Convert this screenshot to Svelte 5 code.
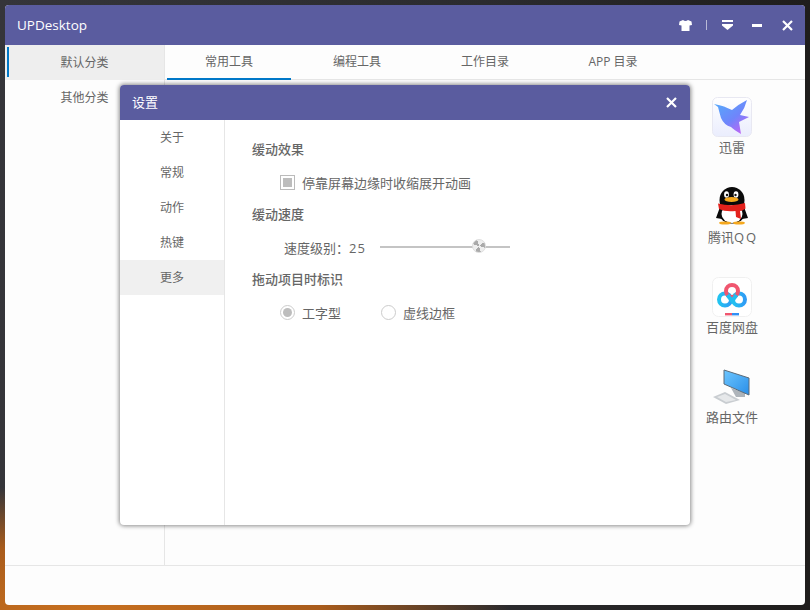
<script>
    let cats = ["默认分类", "其他分类"];
    let tabs = ["常用工具", "编程工具", "工作目录", "APP 目录"];
    let menu = ["关于", "常规", "动作", "热键", "更多"];
</script>

<div class="desktop">
    <div class="window">
        <header class="titlebar">
            <span class="title">UPDesktop</span>
            <div class="tools">
                <svg width="13" height="11" viewBox="0 0 13 11"><path d="M4 0 L0.5 1.5 L0 5 L2.5 5.5 L2.5 11 L10.5 11 L10.5 5.5 L13 5 L12.5 1.5 L9 0 Q6.5 2 4 0 Z" fill="#fff"/></svg>
                <i class="sep"></i>
                <svg width="11" height="10" viewBox="0 0 11 10"><rect width="11" height="2" fill="#fff"/><path d="M0 4 H11 V5.5 L5.5 10 L0 5.5 Z" fill="#fff"/></svg>
                <svg class="min" width="10" height="3" viewBox="0 0 10 3"><rect width="10" height="3" fill="#fff"/></svg>
                <svg width="11" height="11" viewBox="0 0 11 11"><path d="M1 1 L10 10 M10 1 L1 10" stroke="#fff" stroke-width="2.2"/></svg>
            </div>
        </header>

        <div class="body">
            <aside class="cats">
                {#each cats as c, i}
                    <div class="cat" class:on={i === 0}>{c}</div>
                {/each}
            </aside>
            <main class="content">
                <nav class="tabs">
                    {#each tabs as t, i}
                        <div class="tab" class:on={i === 0}>{t}</div>
                    {/each}
                </nav>
                <div class="apps">
                    <div class="app">
                        <svg width="40" height="40" viewBox="0 0 40 40">
                            <defs>
                                <linearGradient id="bird" x1="0" y1="0" x2="0.8" y2="1">
                                    <stop offset="0" stop-color="#52aefb"/>
                                    <stop offset="0.6" stop-color="#6f85fb"/>
                                    <stop offset="1" stop-color="#c463f5"/>
                                </linearGradient>
                                <linearGradient id="tile" x1="0" y1="0" x2="0" y2="1">
                                    <stop offset="0" stop-color="#fff"/>
                                    <stop offset="1" stop-color="#eaedfd"/>
                                </linearGradient>
                            </defs>
                            <rect x="0.5" y="0.5" width="39" height="39" rx="5" fill="url(#tile)" stroke="#e8e8f2"/>
                            <path d="M2 7 Q8 8 12 9.5 Q17 11.5 20 13 Q27 7 35 3 Q33 11 28 18 L37 20 L27 25 L29 37 Q22 33 19 30 Q12 28 9 21 Q7 14 6 10 Z" fill="url(#bird)"/>
                        </svg>
                        <span>迅雷</span>
                    </div>
                    <div class="app">
                        <svg width="40" height="40" viewBox="0 0 40 40">
                            <ellipse cx="20" cy="13" rx="12.5" ry="13" fill="#0a0a0a"/>
                            <ellipse cx="20" cy="26" rx="13" ry="10.5" fill="#0a0a0a"/>
                            <path d="M8 20 L4 31 L10 32 Z M32 20 L36 31 L30 32 Z" fill="#0a0a0a"/>
                            <ellipse cx="20" cy="27" rx="10.5" ry="9" fill="#fff"/>
                            <ellipse cx="14.5" cy="7.5" rx="2.4" ry="3.2" fill="#fff"/>
                            <ellipse cx="24" cy="7.5" rx="2.4" ry="3.2" fill="#fff"/>
                            <circle cx="15" cy="8" r="1.2" fill="#111"/>
                            <circle cx="23.5" cy="8" r="1.2" fill="#111"/>
                            <ellipse cx="19.5" cy="12.5" rx="7" ry="2.4" fill="#f5a81e"/>
                            <path d="M6 16.5 Q20 20 33 16 L33.5 21.5 Q30 24 28 24 L29 32 L24 30 L23.5 24 Q13 25 7 22 Z" fill="#e3211c"/>
                            <ellipse cx="13" cy="36" rx="6" ry="1.6" fill="#f5a81e"/>
                            <ellipse cx="27" cy="36" rx="6" ry="1.6" fill="#f5a81e"/>
                        </svg>
                        <span>腾讯<b>QQ</b></span>
                    </div>
                    <div class="app">
                        <svg width="40" height="40" viewBox="0 0 40 40">
                            <defs>
                                <linearGradient id="pan" x1="0" y1="0" x2="1" y2="0">
                                    <stop offset="0" stop-color="#22c3f0"/>
                                    <stop offset="1" stop-color="#2f9bf5"/>
                                </linearGradient>
                            </defs>
                            <rect x="0.5" y="0.5" width="39" height="39" rx="6" fill="#fff" stroke="#f0f0f0"/>
                            <circle cx="13" cy="22.5" r="6" fill="none" stroke="url(#pan)" stroke-width="4"/>
                            <circle cx="27" cy="22.5" r="6" fill="none" stroke="url(#pan)" stroke-width="4"/>
                            <circle cx="20" cy="14" r="6" fill="none" stroke="#f0566f" stroke-width="4"/>
                            <path d="M15.5 18 L20 24 L24.5 18" fill="none" stroke="#22bdf0" stroke-width="4"/>
                            <rect x="13" y="36" width="7" height="2.4" fill="#f0566f"/>
                            <rect x="20" y="36" width="7" height="2.4" fill="#2f8ff5"/>
                        </svg>
                        <span>百度网盘</span>
                    </div>
                    <div class="app">
                        <svg width="40" height="40" viewBox="0 0 40 40">
                            <defs>
                                <linearGradient id="scr" x1="0" y1="0" x2="1" y2="1">
                                    <stop offset="0" stop-color="#6cc6ff"/>
                                    <stop offset="1" stop-color="#2a8ee8"/>
                                </linearGradient>
                            </defs>
                            <path d="M19 21 L33 26 L33 30 L24 30 Z" fill="#aeb4ba"/>
                            <path d="M12 3 L37 11 L37 28 L12 17 Z" fill="url(#scr)" stroke="#5a6b7a" stroke-width="1"/>
                            <path d="M1 30 L13 25 L28 33 L14 37 Z" fill="#c9cdd1"/>
                            <path d="M5 30 L13 27 L24 33 L14 35 Z" fill="#e6e8ea"/>
                        </svg>
                        <span>路由文件</span>
                    </div>
                </div>
            </main>
        </div>
        <footer class="foot"></footer>

        <div class="modal">
            <div class="modal-head">
                <span>设置</span>
                <svg width="11" height="11" viewBox="0 0 11 11"><path d="M1 1 L10 10 M10 1 L1 10" stroke="#fff" stroke-width="2.2"/></svg>
            </div>
            <div class="modal-body">
                <ul class="menu">
                    {#each menu as m, i}
                        <li class:on={i === 4}>{m}</li>
                    {/each}
                </ul>
                <section class="panel">
                    <h4>缓动效果</h4>
                    <div class="row check-row">
                        <span class="check"><i></i></span>
                        <span>停靠屏幕边缘时收缩展开动画</span>
                    </div>
                    <h4>缓动速度</h4>
                    <div class="row speed-row">
                        <span class="speed-label">速度级别：<b>25</b></span>
                        <div class="slider"><span class="thumb"></span></div>
                    </div>
                    <h4>拖动项目时标识</h4>
                    <div class="row radio-row">
                        <span class="radio sel"><i></i></span>
                        <span class="radio-text">工字型</span>
                        <span class="radio"></span>
                        <span>虚线边框</span>
                    </div>
                </section>
            </div>
        </div>
    </div>
</div>

<style>
    :global(body) {
        margin: 0;
    }
    .desktop {
        width: 810px;
        height: 610px;
        padding: 5px;
        box-sizing: border-box;
        overflow: hidden;
        background:
            radial-gradient(ellipse 420px 130px at 90px 615px, #c8701f 0%, #a95c1c 55%, transparent 100%),
            linear-gradient(90deg, #35353a 0%, #2b2b2e 60%, #1f1d1c 100%);
        font-family: "Open Sans", "Noto Sans CJK SC", sans-serif;
        font-size: 12px;
        color: #666;
    }
    .window {
        position: relative;
        width: 800px;
        height: 600px;
        background: #fdfdfd;
        border-radius: 4px;
        overflow: hidden;
        display: flex;
        flex-direction: column;
    }
    .titlebar {
        height: 40px;
        flex: none;
        background: #5a5c9f;
        display: flex;
        align-items: center;
        justify-content: space-between;
        padding: 0 12px;
        color: #fff;
    }
    .title {
        font-size: 13.5px;
    }
    .tools {
        display: flex;
        align-items: center;
    }
    .tools svg {
        display: block;
    }
    .sep {
        width: 1px;
        height: 10px;
        background: #b9bad6;
        margin: 0 15px 0 14px;
    }
    .min {
        margin: 0 20px 0 19px;
    }
    .body {
        flex: 1;
        display: flex;
        min-height: 0;
    }
    .cats {
        width: 160px;
        box-sizing: border-box;
        border-right: 1px solid #e6e6e6;
    }
    .cat {
        height: 35px;
        line-height: 35px;
        text-align: center;
    }
    .cat.on {
        background: #eeeeee;
        position: relative;
    }
    .cat.on::before {
        content: "";
        position: absolute;
        left: 2px;
        top: 2px;
        bottom: 3px;
        width: 2px;
        background: #0078c8;
    }
    .content {
        flex: 1;
        display: flex;
        flex-direction: column;
    }
    .tabs {
        height: 35px;
        flex: none;
        box-sizing: border-box;
        display: flex;
        border-bottom: 1px solid #e6e6e6;
    }
    .tab {
        width: 128px;
        line-height: 34px;
        text-align: center;
        position: relative;
    }
    .tab.on::after {
        content: "";
        position: absolute;
        left: 2px;
        right: 2px;
        bottom: -1px;
        height: 2px;
        background: #0078c8;
    }
    .apps {
        display: flex;
        flex-direction: column;
        align-items: center;
        width: 90px;
        margin-left: 522px;
        padding-top: 17px;
    }
    .app {
        height: 90px;
        display: flex;
        flex-direction: column;
        align-items: center;
    }
    .app svg {
        display: block;
    }
    .app span {
        margin-top: 1px;
        font-size: 13px;
        line-height: 18px;
        white-space: nowrap;
    }
    .app b {
        font-weight: 400;
        letter-spacing: 2px;
        margin-right: -2px;
    }
    .foot {
        height: 39px;
        flex: none;
        border-top: 1px solid #e6e6e6;
    }
    .modal {
        position: absolute;
        left: 115px;
        top: 80px;
        width: 570px;
        height: 440px;
        background: #fff;
        border-radius: 4px;
        box-shadow: 0 0 4px 1px rgba(0, 0, 0, 0.45);
        overflow: hidden;
        display: flex;
        flex-direction: column;
    }
    .modal-head {
        height: 35px;
        flex: none;
        background: #5a5c9f;
        color: #fff;
        font-size: 13px;
        line-height: 33px;
        display: flex;
        align-items: center;
        justify-content: space-between;
        padding: 0 13px 0 12px;
    }
    .modal-body {
        flex: 1;
        display: flex;
    }
    .menu {
        width: 105px;
        box-sizing: border-box;
        margin: 0;
        padding: 0;
        list-style: none;
        border-right: 1px solid #e6e6e6;
    }
    .menu li {
        height: 35px;
        line-height: 35px;
        text-align: center;
    }
    .menu li.on {
        background: #f0f0f0;
    }
    .panel {
        flex: 1;
        padding: 13px 27px;
        font-size: 13px;
    }
    h4 {
        margin: 0;
        height: 33px;
        line-height: 33px;
        font-size: 13px;
        font-weight: 500;
        color: #666;
    }
    .row {
        height: 32px;
        display: flex;
        align-items: center;
    }
    .check-row {
        padding-left: 28px;
    }
    .check {
        width: 15px;
        height: 15px;
        box-sizing: border-box;
        border: 1px solid #bbb;
        background: #fff;
        display: flex;
        align-items: center;
        justify-content: center;
        margin-right: 7px;
    }
    .check i {
        width: 9px;
        height: 9px;
        background: #bdbdbd;
    }
    .speed-row {
        padding-left: 32px;
    }
    .speed-label {
        width: 96px;
    }
    .speed-label b {
        font-weight: 400;
        letter-spacing: 1px;
    }
    .slider {
        position: relative;
        width: 130px;
        height: 2px;
        background: #c4c4c4;
    }
    .thumb {
        position: absolute;
        left: 92px;
        top: -7px;
        width: 14px;
        height: 14px;
        border-radius: 50%;
        background: conic-gradient(#eee 0 15%, #aaa 15% 30%, #eee 30% 45%, #aaa 45% 60%, #eee 60% 80%, #aaa 80% 95%, #eee 95%);
        border: 1px solid #ddd;
        box-sizing: border-box;
    }
    .radio-row {
        padding-left: 28px;
    }
    .radio {
        width: 15px;
        height: 15px;
        box-sizing: border-box;
        border: 1px solid #ccc;
        border-radius: 50%;
        display: flex;
        align-items: center;
        justify-content: center;
        margin-right: 7px;
    }
    .radio.sel i {
        width: 9px;
        height: 9px;
        border-radius: 50%;
        background: #bdbdbd;
    }
    .radio-text {
        width: 79px;
    }
</style>
